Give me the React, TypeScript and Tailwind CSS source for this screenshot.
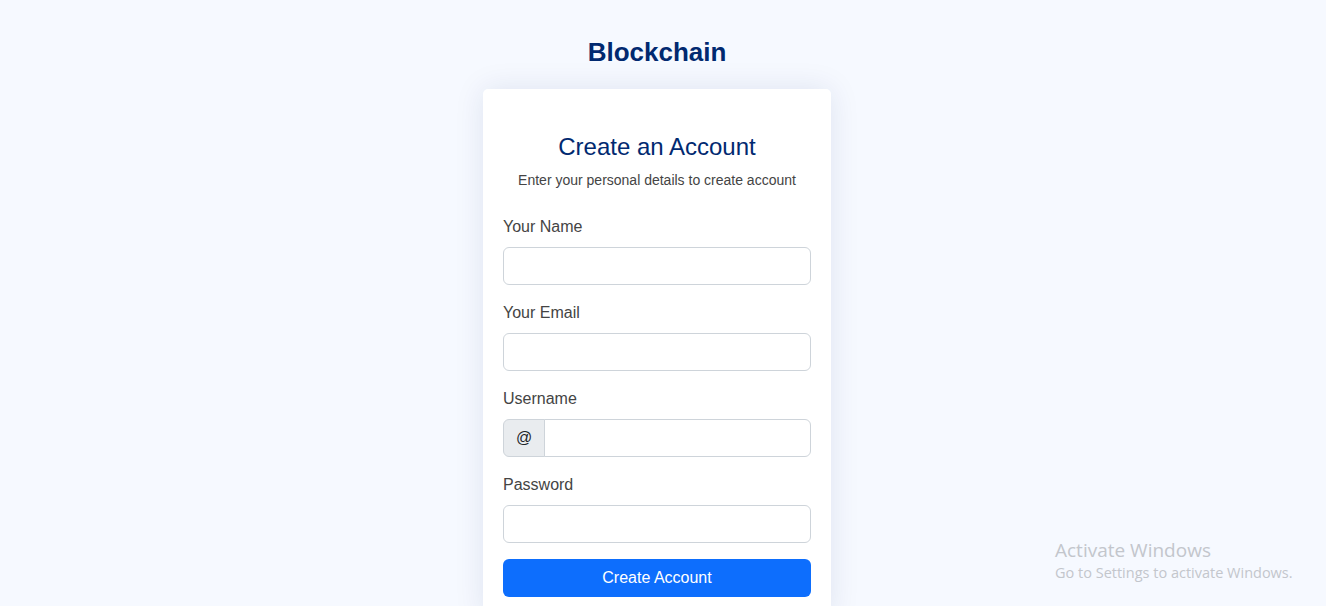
import React from "react";

const inputCls =
  "block w-full h-[38px] rounded-[6px] border border-[#ced4da] bg-white px-3 text-[16px] text-[#212529] outline-none";

function Field({ label, children }: { label: string; children: React.ReactNode }) {
  return (
    <div>
      <label className="block mb-2 text-[16px] leading-6 text-[#444444]">{label}</label>
      {children}
    </div>
  );
}

export default function App() {
  return (
    <div
      className="relative h-screen overflow-hidden bg-[#f6f9ff]"
      style={{ fontFamily: '"Liberation Sans", Arial, sans-serif' }}
    >
      <div className="flex flex-col items-center pt-[39px] pr-[12px]">
        <div className="flex h-[26px] items-center text-[26px] font-bold leading-none text-[#012970]">
          Blockchain
        </div>
        <div className="mt-6 w-[348px] rounded-[5px] bg-white px-5 pb-5 shadow-[0_0_30px_rgba(1,41,112,0.1)]">
          <div className="pt-6 pb-2">
            <h5 className="pt-5 mb-2 text-center text-[24px] font-normal leading-[1.2] text-[#012970]">
              Create an Account
            </h5>
            <p className="mb-4 text-center text-[14px] leading-[1.5] text-[#444444]">
              Enter your personal details to create account
            </p>
          </div>
          <form className="flex flex-col gap-4" onSubmit={(e) => e.preventDefault()}>
            <Field label="Your Name">
              <input type="text" className={inputCls} />
            </Field>
            <Field label="Your Email">
              <input type="email" className={inputCls} />
            </Field>
            <Field label="Username">
              <div className="flex h-[38px]">
                <span className="flex items-center rounded-l-[6px] border border-[#ced4da] bg-[#e9ecef] px-3 text-[16px] text-[#212529]">
                  @
                </span>
                <input
                  type="text"
                  className="-ml-px block h-[38px] min-w-0 flex-1 rounded-r-[6px] border border-[#ced4da] bg-white px-3 text-[16px] outline-none"
                />
              </div>
            </Field>
            <Field label="Password">
              <input type="password" className={inputCls} />
            </Field>
            <button
              type="submit"
              className="h-[38px] w-full rounded-[6px] bg-[#0d6efd] text-[16px] text-white"
            >
              Create Account
            </button>
          </form>
        </div>
      </div>
      <div
        className="absolute left-[1055px] top-[537px] text-[#c3c6cc]"
        style={{ fontFamily: '"Open Sans", "Noto Sans", sans-serif' }}
      >
        <div className="text-[19px] leading-[26px]">Activate Windows</div>
        <div className="text-[14.5px] leading-[20px]">Go to Settings to activate Windows.</div>
      </div>
    </div>
  );
}
